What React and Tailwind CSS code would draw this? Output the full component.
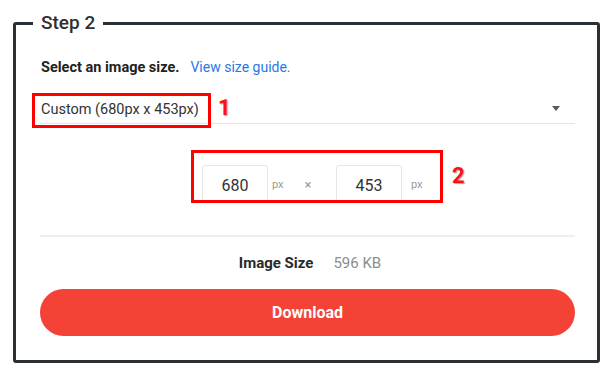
import React from "react";

const SizeInput = ({ value }) => (
  <div className="w-[66px] h-[40px] shrink-0 flex items-center justify-center rounded-[3px] border border-[#e6e6e6] text-[16px] text-[#333] pt-[1px]">
    {value}
  </div>
);

const Unit = ({ children, className = "" }) => (
  <span className={`h-[40px] flex items-center text-[11px] text-[#9a9a9a] ${className}`}>{children}</span>
);

const App = () => {
  return (
    <div className="w-[610px] h-[373px] bg-white pt-[11px] font-['Roboto','Liberation_Sans',sans-serif]">
      <fieldset className="ml-[13px] w-[587px] border-[3px] border-[#2b3036] rounded-[3px] pl-[24px] pr-[22px] pt-0 pb-[24px]">
        <legend className="-ml-[7px] px-[8px] text-[19px] leading-[24px] font-medium text-[#2f2f2f]">
          Step 2
        </legend>

        {/* Size picker */}
        <div className="mt-[22px] h-[20px] flex items-baseline pl-[1px]">
          <span className="text-[14.5px] leading-[20px] font-bold text-[#222]">Select an image size.</span>
          <span className="ml-[11px] text-[14px] leading-[20px] text-[#2a78e4]">View size guide.</span>
        </div>

        <div className="relative mt-[16px] h-[31px] border-b border-[#e5e5e5] flex items-center justify-between pl-[1px] pr-[15px]">
          <span className="text-[14.5px] text-[#333] pt-[3px]">Custom (680px x 453px)</span>
          <svg width="8" height="5" viewBox="0 0 8 5" className="mt-[1px]">
            <path d="M0 0h8L4 5z" fill="#5a5a5a" />
          </svg>
          <div className="absolute -left-[8px] top-0 w-[179px] h-[35px] border-[3px] border-[#ff0000]" />
          <span className="absolute left-[178px] top-[3px] text-[22px] leading-[24px] font-bold text-[#ff1010] [text-shadow:1px_1px_1px_rgba(0,0,0,0.35)]">
            1
          </span>
        </div>

        {/* Dimensions */}
        <div className="mt-[26px] flex items-start pl-[151px]">
          <div className="h-[53px] w-[252px] border-[3px] border-[#ff0000] overflow-hidden flex items-start pt-[12px] pl-[8px]">
            <SizeInput value="680" />
            <Unit className="w-[28px] pl-[4px]">px</Unit>
            <Unit className="w-[24px] justify-center text-[13px] text-[#8a8a8a]">×</Unit>
            <div className="ml-[16px]">
              <SizeInput value="453" />
            </div>
            <Unit className="ml-[9px]">px</Unit>
          </div>
          <span className="ml-[9px] mt-[14px] text-[22px] leading-[24px] font-bold text-[#ff1010] [text-shadow:1px_1px_1px_rgba(0,0,0,0.35)]">
            2
          </span>
        </div>

        <div className="mt-[32px] h-[2px] bg-[#efefef]" />

        <div className="mt-[16px] flex justify-center items-center text-[15px] leading-[20px] pl-[5px]">
          <span className="font-bold text-[#2a2a2a]">Image Size</span>
          <span className="ml-[20px] text-[#8c8c8c]">596 KB</span>
        </div>

        <button className="mt-[16px] w-full h-[47px] rounded-full bg-[#f44336] text-white text-[16px] font-bold">
          Download
        </button>
      </fieldset>
    </div>
  );
};

export default App;
